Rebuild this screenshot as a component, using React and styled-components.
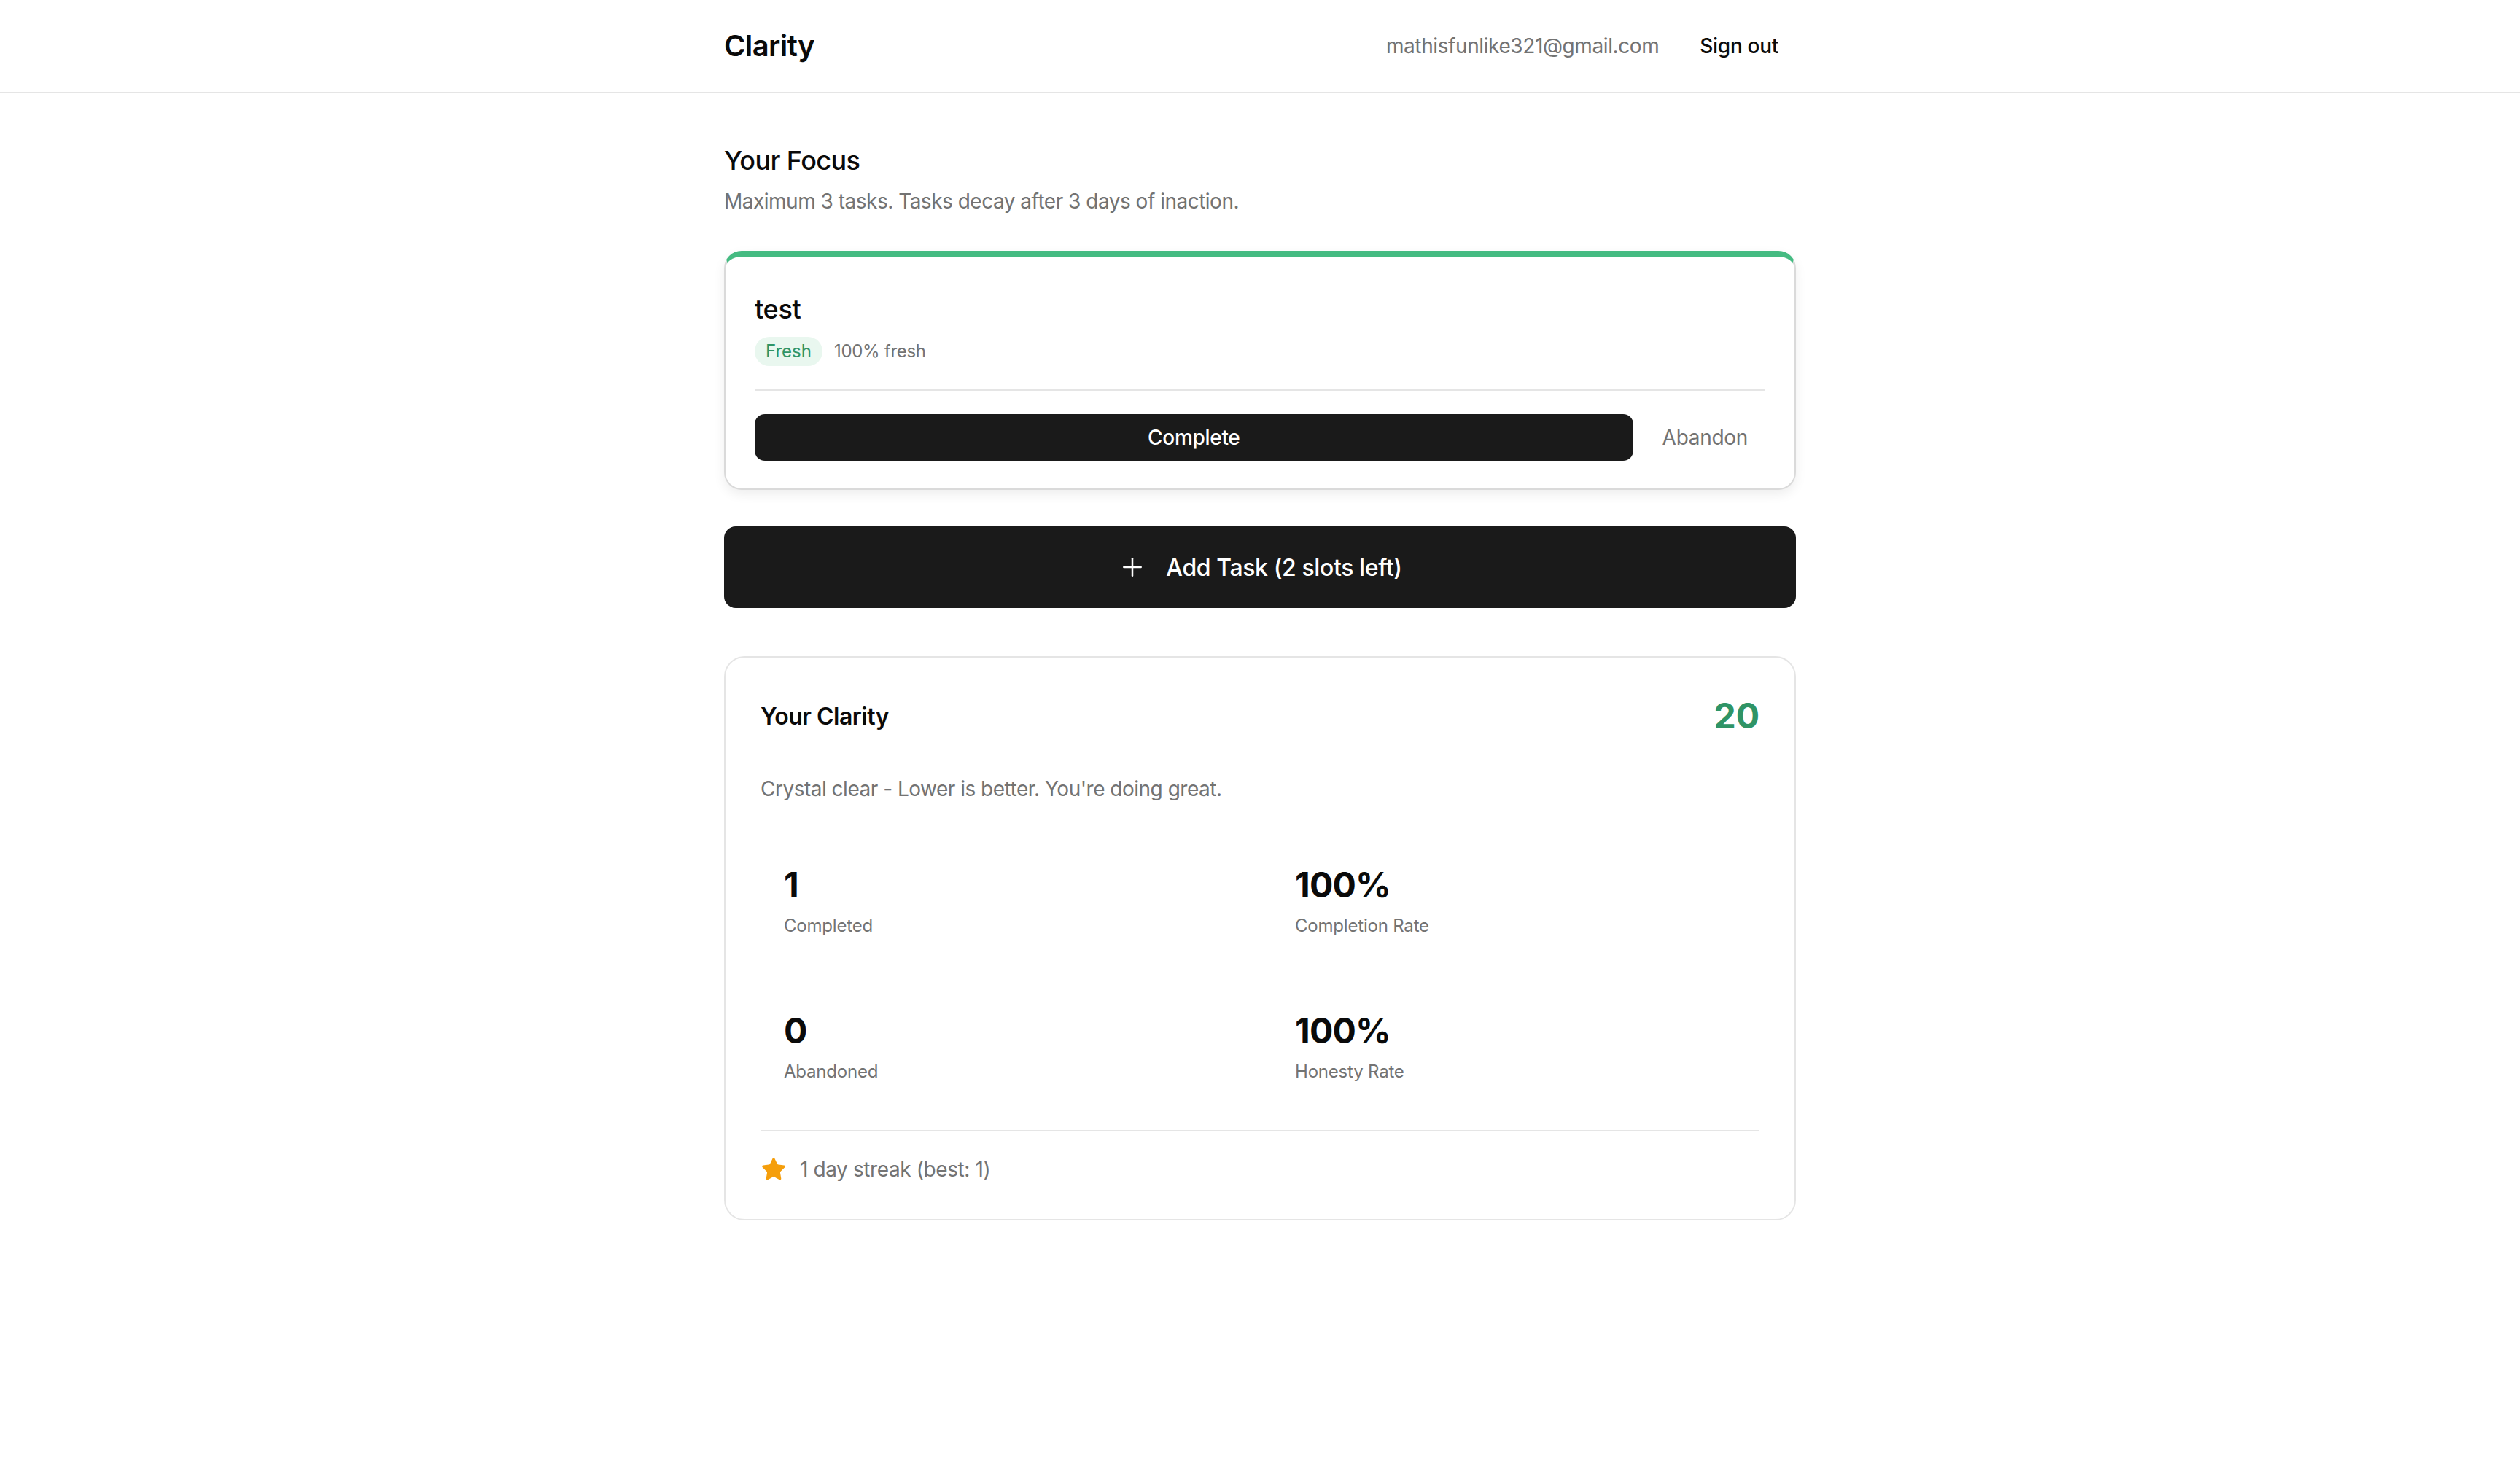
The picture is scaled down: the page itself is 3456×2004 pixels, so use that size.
import React from 'react';
import styled, { createGlobalStyle } from 'styled-components';
import { Plus, Star } from 'lucide-react';

const GlobalStyle = createGlobalStyle`
  body {
    margin: 0;
    background: #ffffff;
    font-family: Inter, "Noto Sans", sans-serif;
    color: #0a0a0a;
  }
  * { box-sizing: border-box; }
`;

const Header = styled.header`
  height: 128px;
  border-bottom: 2px solid #e5e5e5;
  display: flex;
`;
const HeaderInner = styled.div`
  width: 1470px;
  margin: 0 auto;
  display: flex;
  align-items: center;
  justify-content: space-between;
`;
const Logo = styled.h1`
  margin: 0;
  font-size: 40px;
  line-height: 56px;
  font-weight: 600;
  letter-spacing: -0.6px;
`;
const UserArea = styled.div`
  display: flex;
  align-items: center;
  gap: 32px;
`;
const Email = styled.span`
  font-size: 28px;
  line-height: 40px;
  color: #737373;
  letter-spacing: -0.4px;
`;
const TextButton = styled.button`
  border: none;
  background: none;
  font-family: inherit;
  font-size: 28px;
  line-height: 40px;
  height: 64px;
  padding: 0 24px;
  letter-spacing: -0.3px;
  color: ${(p) => p.color || '#0a0a0a'};
  font-weight: ${(p) => p.weight || 500};
  cursor: pointer;
`;

const Main = styled.main`
  width: 1470px;
  margin: 0 auto;
  padding-top: 64px;
`;
const Title = styled.h2`
  margin: 0;
  font-size: 36px;
  line-height: 56px;
  font-weight: 500;
  letter-spacing: -0.6px;
`;
const Subtitle = styled.p`
  margin: 8px 0 0;
  font-size: 28px;
  line-height: 40px;
  color: #737373;
  letter-spacing: -0.5px;
`;

const TaskCard = styled.div`
  margin-top: 48px;
  border: 2px solid #dadada;
  border-top: 8px solid #45bb82;
  border-radius: 24px;
  background: #fff;
  box-shadow: 0 6px 16px rgba(0, 0, 0, 0.07);
  padding: 44px 40px 38px;
`;
const TaskTop = styled.div`
  padding-bottom: 32px;
  border-bottom: 2px solid #e5e5e5;
`;
const TaskTitle = styled.div`
  font-size: 36px;
  line-height: 56px;
  font-weight: 500;
  letter-spacing: -0.3px;
`;
const MetaRow = styled.div`
  display: flex;
  align-items: center;
  gap: 16px;
  margin-top: 10px;
`;
const Badge = styled.span`
  padding: 4px 15px;
  border-radius: 999px;
  background: #e9f7ef;
  color: #2f9466;
  font-size: 24px;
  line-height: 32px;
`;
const Meta = styled.span`
  font-size: 24px;
  line-height: 32px;
  color: #737373;
  letter-spacing: -0.3px;
`;
const Actions = styled.div`
  display: flex;
  align-items: center;
  gap: 16px;
  margin-top: 32px;
`;
const PrimaryButton = styled.button`
  flex: 1;
  height: 64px;
  border: none;
  border-radius: 14px;
  background: #1a1a1a;
  color: #fff;
  font-family: inherit;
  font-size: 28px;
  font-weight: 500;
  letter-spacing: -0.3px;
  cursor: pointer;
`;

const AddButton = styled.button`
  margin-top: 50px;
  width: 100%;
  height: 112px;
  border: none;
  border-radius: 16px;
  background: #1a1a1a;
  color: #fff;
  font-family: inherit;
  font-size: 32px;
  font-weight: 500;
  letter-spacing: -0.4px;
  display: flex;
  align-items: center;
  justify-content: center;
  gap: 26px;
  cursor: pointer;
`;

const StatsCard = styled.section`
  margin-top: 66px;
  border: 2px solid #e5e5e5;
  border-radius: 28px;
  padding: 48px;
`;
const StatsHead = styled.div`
  display: flex;
  align-items: center;
  justify-content: space-between;
  height: 64px;
`;
const StatsTitle = styled.h3`
  margin: 0;
  font-size: 32px;
  font-weight: 600;
  letter-spacing: -0.5px;
`;
const Score = styled.span`
  font-size: 48px;
  line-height: 64px;
  font-weight: 700;
  color: #2f9466;
`;
const StatsNote = styled.p`
  margin: 48px 0 0;
  font-size: 28px;
  line-height: 40px;
  color: #737373;
  letter-spacing: -0.5px;
`;
const StatsGrid = styled.div`
  display: grid;
  grid-template-columns: 1fr 1fr;
  gap: 32px;
  margin-top: 48px;
`;
const Stat = styled.div`
  padding: 32px;
`;
const StatValue = styled.div`
  font-size: 48px;
  line-height: 64px;
  font-weight: 700;
  letter-spacing: -0.8px;
`;
const StatLabel = styled.div`
  margin-top: 8px;
  font-size: 24px;
  line-height: 32px;
  color: #737373;
  letter-spacing: -0.2px;
`;
const Streak = styled.div`
  margin-top: 32px;
  padding-top: 32px;
  border-top: 2px solid #e5e5e5;
  display: flex;
  align-items: center;
  gap: 18px;
  font-size: 28px;
  line-height: 40px;
  color: #737373;
  letter-spacing: -0.4px;
`;

const stats = [
  { value: '1', label: 'Completed' },
  { value: '100%', label: 'Completion Rate' },
  { value: '0', label: 'Abandoned' },
  { value: '100%', label: 'Honesty Rate' },
];

export default function App() {
  return (
    <>
      <GlobalStyle />
      <Header>
        <HeaderInner>
          <Logo>Clarity</Logo>
          <UserArea>
            <Email>mathisfunlike321@gmail.com</Email>
            <TextButton>Sign out</TextButton>
          </UserArea>
        </HeaderInner>
      </Header>
      <Main>
        <Title>Your Focus</Title>
        <Subtitle>Maximum 3 tasks. Tasks decay after 3 days of inaction.</Subtitle>

        <TaskCard>
          <TaskTop>
            <TaskTitle>test</TaskTitle>
            <MetaRow>
              <Badge>Fresh</Badge>
              <Meta>100% fresh</Meta>
            </MetaRow>
          </TaskTop>
          <Actions>
            <PrimaryButton>Complete</PrimaryButton>
            <TextButton color="#737373" weight={400}>Abandon</TextButton>
          </Actions>
        </TaskCard>

        <AddButton>
          <Plus size={40} strokeWidth={1.5} />
          Add Task (2 slots left)
        </AddButton>

        <StatsCard>
          <StatsHead>
            <StatsTitle>Your Clarity</StatsTitle>
            <Score>20</Score>
          </StatsHead>
          <StatsNote>Crystal clear - Lower is better. You're doing great.</StatsNote>
          <StatsGrid>
            {stats.map((s) => (
              <Stat key={s.label}>
                <StatValue>{s.value}</StatValue>
                <StatLabel>{s.label}</StatLabel>
              </Stat>
            ))}
          </StatsGrid>
          <Streak>
            <Star size={36} fill="#f59e0b" color="#f59e0b" strokeWidth={1} />
            1 day streak (best: 1)
          </Streak>
        </StatsCard>
      </Main>
    </>
  );
}
